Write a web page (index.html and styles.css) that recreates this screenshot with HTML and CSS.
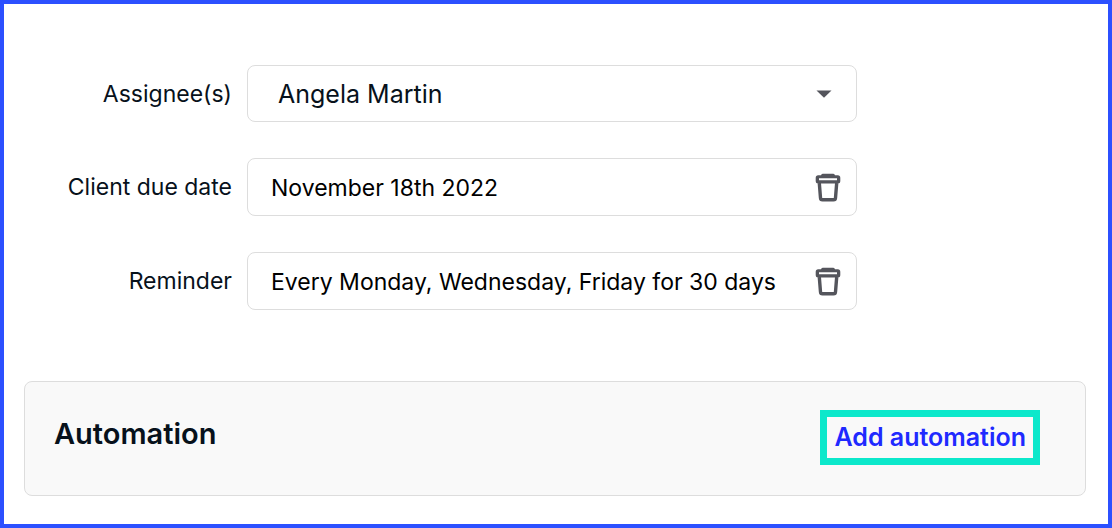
FILE: index.html
```html
<!DOCTYPE html>
<html lang="en">
<head>
<meta charset="utf-8">
<meta name="viewport" content="width=device-width, initial-scale=1">
<title>Automation settings</title>
<link rel="stylesheet" href="styles.css">
</head>
<body>
<main class="page">
  <form class="fields">
    <label class="label" for="assignee">Assignee(s)</label>
    <div class="control control-select">
      <select class="input" id="assignee"><option>Angela Martin</option></select>
      <svg class="caret" viewBox="0 0 16 8" aria-hidden="true"><path d="M.5.500h15L8 7.700z"/></svg>
    </div>
    <label class="label" for="due">Client due date</label>
    <div class="control">
      <input class="input" id="due" type="text" value="November 18th 2022">
      <button class="remove" type="button" aria-label="Clear client due date">
        <svg class="trash" viewBox="0 0 26 30" aria-hidden="true"><path d="M4.300 10l1.200 14.800a2 2 0 0 0 2 1.900h11a2 2 0 0 0 2-1.900L21.700 10"/><path fill-rule="evenodd" class="lid" d="M6 2.200Q6.600.800 8 .800h10q1.400 0 2 1.400h2.800A2.500 2.500 0 0 1 25.300 4.700V8a2.500 2.500 0 0 1-2.500 2.500H3.200A2.500 2.500 0 0 1 .7 8V4.700a2.500 2.500 0 0 1 2.500-2.500zM4 5.300v2h18v-2z"/></svg>
      </button>
    </div>
    <label class="label" for="reminder">Reminder</label>
    <div class="control">
      <input class="input" id="reminder" type="text" value="Every Monday, Wednesday, Friday for 30 days">
      <button class="remove" type="button" aria-label="Clear reminder">
        <svg class="trash" viewBox="0 0 26 30" aria-hidden="true"><path d="M4.300 10l1.200 14.800a2 2 0 0 0 2 1.900h11a2 2 0 0 0 2-1.900L21.700 10"/><path fill-rule="evenodd" class="lid" d="M6 2.200Q6.600.800 8 .800h10q1.400 0 2 1.400h2.800A2.500 2.500 0 0 1 25.300 4.700V8a2.500 2.500 0 0 1-2.500 2.500H3.200A2.500 2.500 0 0 1 .7 8V4.700a2.500 2.500 0 0 1 2.500-2.500zM4 5.300v2h18v-2z"/></svg>
      </button>
    </div>
  </form>
  <section class="panel">
    <h2 class="title">Automation</h2>
    <button class="add" type="button">Add automation</button>
  </section>
</main>
</body>
</html>
```
FILE: styles.css
```css
* { box-sizing: border-box; }
body { margin: 0; font-family: Inter, "Liberation Sans", sans-serif; color: #07111b; background: #fff; }
.page { min-height: 100vh; border: 4px solid #2c50ff; padding: 61px 22px 28px 20px; }
.fields { display: grid; grid-template-columns: 208px minmax(0, 610px); column-gap: 15px; row-gap: 36px; align-items: center; }
.label { text-align: right; font-size: 23px; line-height: 32px; white-space: nowrap; }
.control { display: flex; align-items: center; height: 58px; padding: 0 15px 0 23px; border: 1px solid #ddd; border-radius: 8px; }
.input { flex: 1; min-width: 0; height: 100%; padding: 2px 0 0; border: 0; background: none; font: inherit; font-size: 23px; color: #000; outline: 0; appearance: none; }
.control-select { height: 57px; padding: 0 24px 0 30px; }
.control-select .input { padding: 0; font-size: 25px; color: inherit; }
.caret { width: 16px; height: 8px; fill: #54555c; }
.remove { display: flex; padding: 2px 0 0; border: 0; background: none; }
.trash { width: 26px; height: 30px; fill: none; stroke: #54555c; stroke-width: 3.4; stroke-linejoin: round; }
.lid { fill: #54555c; stroke: none; }
.panel { display: flex; align-items: flex-start; justify-content: space-between; margin-top: 71px; padding: 28px 45px 30px 29px; border: 1px solid #ddd; border-radius: 8px; background: #f9f9f9; }
.title { margin: 0; font-size: 29px; line-height: 48px; font-weight: 600; }
.add { padding: 7px; border: 7px solid #0ce8cb; background: #f9f9f9; color: #2029ff; font: inherit; font-size: 25px; line-height: 27px; font-weight: 600; white-space: nowrap; }
```
